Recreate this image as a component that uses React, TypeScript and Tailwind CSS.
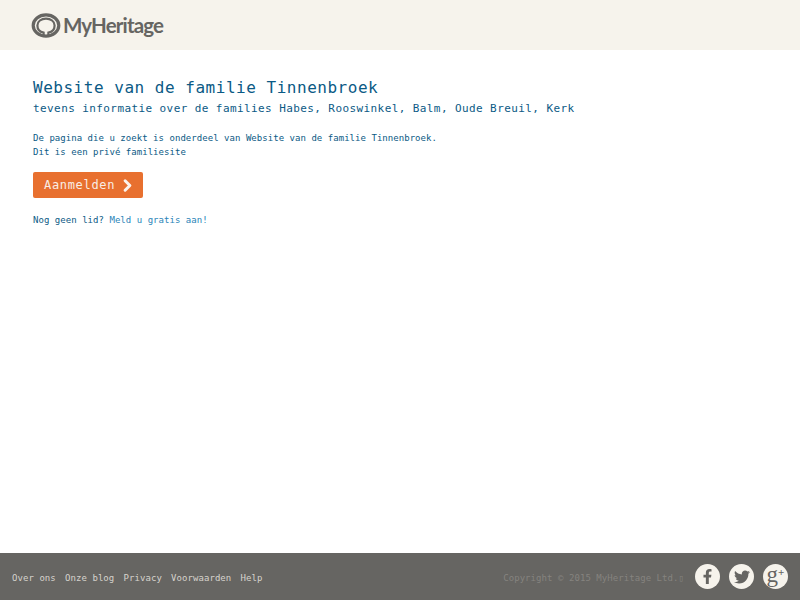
import { ChevronRight } from 'lucide-react';
import { FaFacebookF, FaTwitter } from 'react-icons/fa';

const footerLinks = ['Over ons', 'Onze blog', 'Privacy', 'Voorwaarden', 'Help'];

function LogoMark() {
  return (
    <svg width="30" height="25" viewBox="0 0 30 25" fill="none">
      <ellipse cx="15" cy="12.5" rx="12.8" ry="10.6" stroke="#666562" strokeWidth="3.2" />
      <path
        d="M12.6 22 L12.6 19.6 C9 18.8 6.4 16 6.4 12.4 C6.4 8.4 10.2 5.6 15 5.6 C19.8 5.6 23.6 8.4 23.6 12.4 C23.6 16 21 18.8 17.4 19.6 L17.4 22"
        stroke="#666562"
        strokeWidth="2.2"
      />
    </svg>
  );
}

export default function App() {
  return (
    <div className="flex h-[600px] flex-col bg-white font-['DejaVu_Sans_Mono',monospace]">
      <header className="flex h-[50px] items-center bg-[#f6f3ec] pl-[31px]">
        <LogoMark />
        <span className="ml-[2px] font-['Lato',sans-serif] text-[20.5px] leading-none font-bold tracking-[-0.85px] text-[#666562]">
          MyHeritage
        </span>
      </header>

      <main className="flex-1 pt-[28px] pl-[33px] text-[#0b5a85]">
        <h1 className="text-[16px] leading-[20px] tracking-[0.52px]">Website van de familie Tinnenbroek</h1>
        <h2 className="mt-[3px] text-[11px] leading-[16px] tracking-[0.41px]">
          tevens informatie over de families Habes, Rooswinkel, Balm, Oude Breuil, Kerk
        </h2>
        <p className="mt-[14px] text-[9px] leading-[14px] tracking-[0.04px]">
          De pagina die u zoekt is onderdeel van Website van de familie Tinnenbroek.
          <br />
          Dit is een privé familiesite
        </p>
        <button className="mt-[13px] flex h-[26px] w-[110px] items-center rounded-[2px] bg-[#e8702f] pl-[11px] text-[12px] tracking-[0.68px] text-[#f9ede4]">
          Aanmelden
          <ChevronRight size={19} strokeWidth={3.8} className="ml-[3px] text-[#fbf3ec]" />
        </button>
        <p className="mt-[15px] text-[9px] leading-[14px] tracking-[0.04px]">
          Nog geen lid? <a className="text-[#2a84b8]">Meld u gratis aan!</a>
        </p>
      </main>

      <footer className="flex h-[47px] items-center justify-between bg-[#666562] px-[12px] text-[9px] tracking-[0.06px]">
        <nav className="mt-[5px] flex gap-[9.2px] text-[#d6d3cd]">
          {footerLinks.map((link) => (
            <a key={link}>{link}</a>
          ))}
        </nav>
        <div className="flex items-center">
          <span className="mt-[5px] mr-[11px] text-[#85837f]">Copyright © 2015 MyHeritage Ltd.▯</span>
          <div className="flex gap-[9px] text-[#666562]">
            <span className="flex h-[25px] w-[25px] items-center justify-center rounded-full bg-[#f6f3ec]">
              <FaFacebookF size={15} />
            </span>
            <span className="flex h-[25px] w-[25px] items-center justify-center rounded-full bg-[#f6f3ec]">
              <FaTwitter size={16} />
            </span>
            <span className="flex h-[25px] w-[25px] items-center justify-center rounded-full bg-[#f6f3ec] font-['Liberation_Serif',serif] text-[23px] leading-none">
              <span className="-mt-[5px]">g</span>
              <span className="-mt-[9px] text-[11px] font-bold">+</span>
            </span>
          </div>
        </div>
      </footer>
    </div>
  );
}
